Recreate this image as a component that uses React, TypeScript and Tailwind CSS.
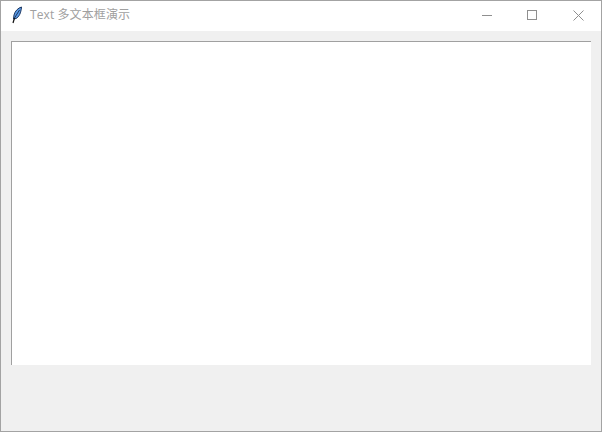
const App = () => {
  return (
    <div className="w-[602px] h-[432px] flex flex-col border border-[#a3a3a3] bg-[#f0f0f0] overflow-hidden">
      {/* Title bar */}
      <div className="h-[30px] shrink-0 flex items-center bg-white">
        <svg width="16" height="18" viewBox="0 0 16 18" className="ml-[8px] mt-[-2px]">
          <path d="M12.5 1 C9 2 6 5 5 9 L4.5 13 L7 12.5 C10 11 12 7 12.5 1 Z" fill="#5b9be6" stroke="#1a3560" strokeWidth="1" />
          <path d="M10.5 4 L5.5 12" stroke="#1a3560" strokeWidth="1" fill="none" />
          <path d="M5.5 12 L4 17" stroke="#111111" strokeWidth="1.2" fill="none" />
        </svg>
        <span
          className="ml-[5px] mt-[-2px] text-[12px] tracking-[0.1px] text-[#a0a0a0] leading-none"
          style={{ fontFamily: '"Open Sans", "Noto Sans CJK SC", sans-serif' }}
        >
          Text 多文本框演示
        </span>
        <div className="ml-auto flex h-full pb-[2px]">
          <div className="w-[46px] flex items-center justify-center">
            <div className="w-[10px] h-px ml-[2px] bg-[#8f8f8f]" />
          </div>
          <div className="w-[46px] flex items-center justify-center">
            <div className="w-[10px] h-[10px] border border-[#8f8f8f]" />
          </div>
          <div className="w-[46px] flex items-center justify-center">
            <svg width="11" height="11" viewBox="0 0 11 11">
              <path d="M0.5 0.5 L10.5 10.5 M10.5 0.5 L0.5 10.5" stroke="#8f8f8f" strokeWidth="1" fill="none" />
            </svg>
          </div>
        </div>
      </div>
      {/* Text widget */}
      <div className="flex-1 pt-[10px] pl-[10px] pr-[10px]">
        <div className="h-[324px] bg-white border-t border-l border-[#a0a0a0]" />
      </div>
    </div>
  );
};

export default App;
